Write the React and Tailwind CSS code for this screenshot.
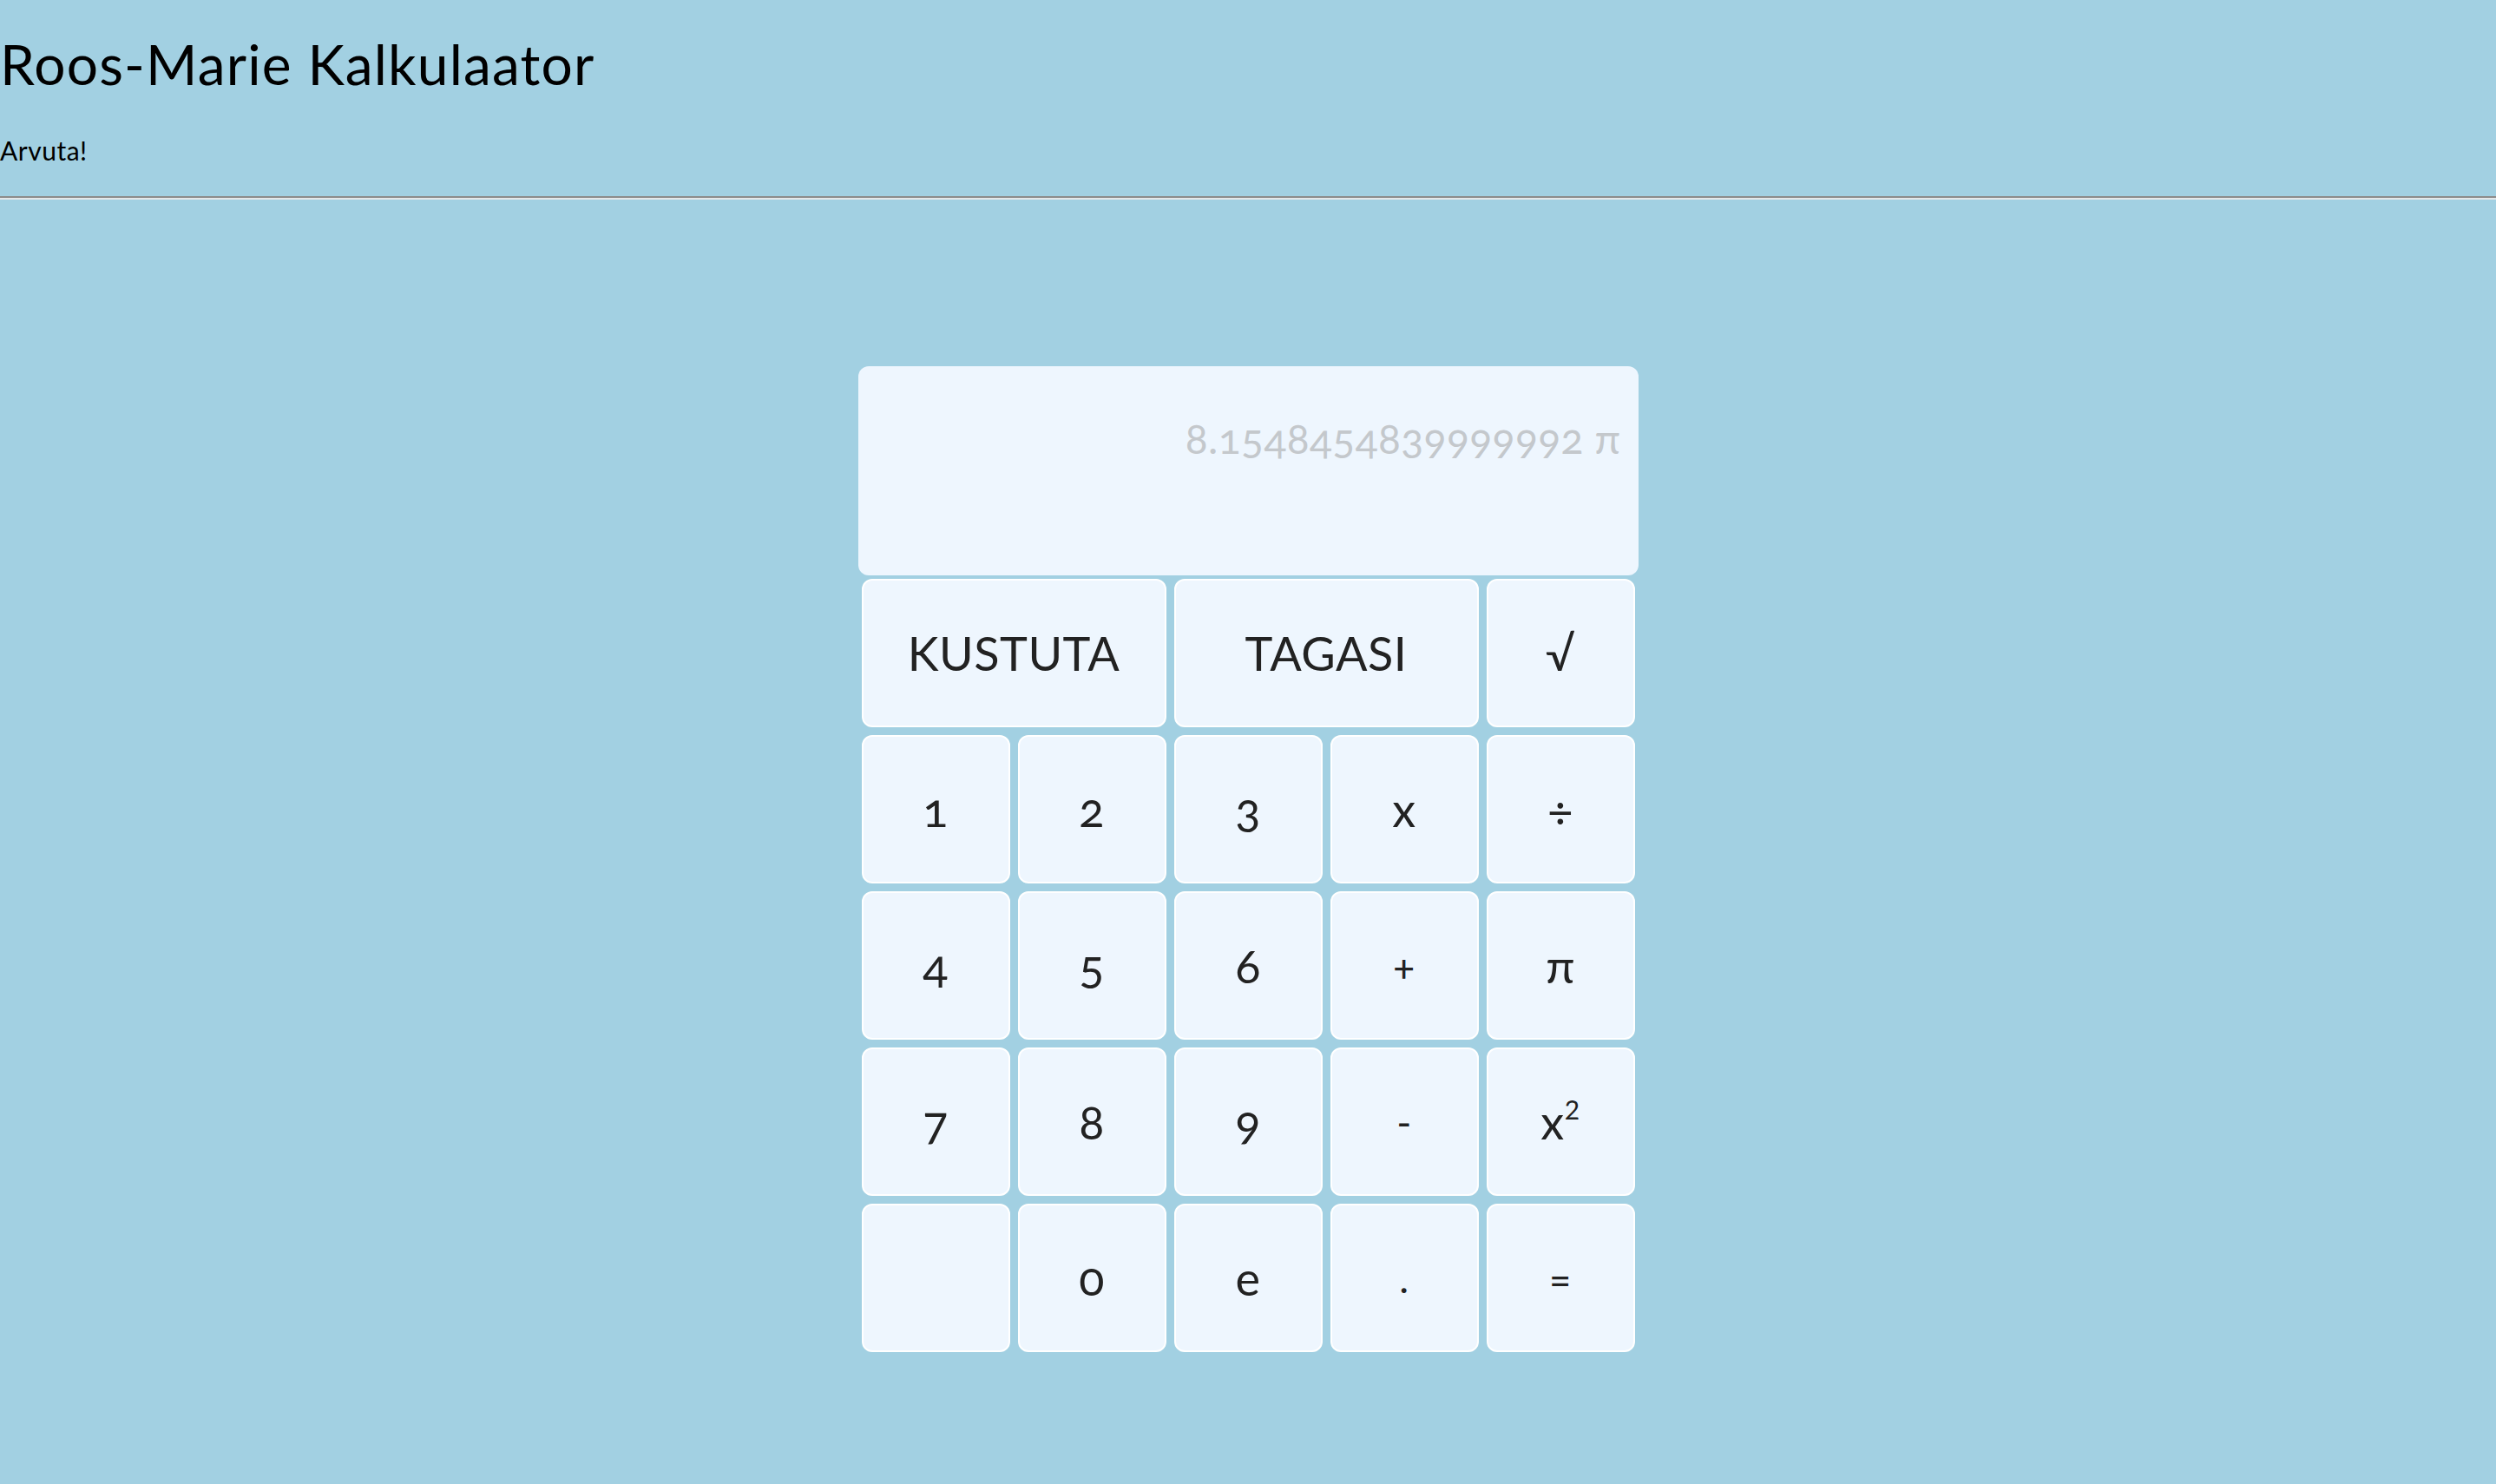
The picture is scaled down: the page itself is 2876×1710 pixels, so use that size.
import React from "react";

const rows = [
  ["1", "2", "3", "x", "÷"],
  ["4", "5", "6", "+", "π"],
  ["7", "8", "9", "-", "x²"],
  ["", "0", "e", ".", "="],
];

function Key({ children, wide, small }) {
  return (
    <button
      className={
        "h-[171px] rounded-[12px] border-2 border-white bg-[#eef6fe] text-[#222222] flex items-center justify-center oldstyle-nums tracking-[0.5px] " +
        (wide ? "col-span-2 " : "") +
        (small ? "text-[46px]" : "text-[54px]")
      }
    >
      {children}
    </button>
  );
}

export default function App() {
  return (
    <div
      className="min-h-screen bg-[#a2d0e2] text-black"
      style={{ fontFamily: "Lato, 'Noto Sans', sans-serif" }}
    >
      <header>
        <h1 className="pt-[36px] text-[64px] leading-[1.2] font-normal tracking-[1.2px]">Roos-Marie Kalkulaator</h1>
        <p className="mt-[42px] text-[30px] leading-[1.2] tracking-[0.5px]">Arvuta!</p>
        <div className="mt-[35px] h-[2px] bg-[#8c8c8c]"></div>
        <div className="h-[2px] bg-[#e4e8ea]"></div>
      </header>

      <main className="mx-auto mt-[192px] w-[899px]">
        <div className="h-[241px] rounded-[12px] bg-[#eef6fe] pt-[54px] pr-[20px] text-right text-[48px] leading-[1.2] tracking-[0.4px] text-[#c4c8cc] oldstyle-nums">
          8.1548454839999992 π
        </div>
        <div className="grid grid-cols-5 gap-[9px] px-[4px] pt-[4px]">
          <Key wide>KUSTUTA</Key>
          <Key wide>TAGASI</Key>
          <Key>√</Key>
          {rows.flat().map((k, i) => (
            <Key key={i} small={["+", "-", ".", "="].includes(k)}>
              {k === "x²" ? (
                <span className="flex items-baseline">
                  x
                  <span className="relative -top-[23px] text-[30px] lining-nums">2</span>
                </span>
              ) : (
                k
              )}
            </Key>
          ))}
        </div>
      </main>
    </div>
  );
}
